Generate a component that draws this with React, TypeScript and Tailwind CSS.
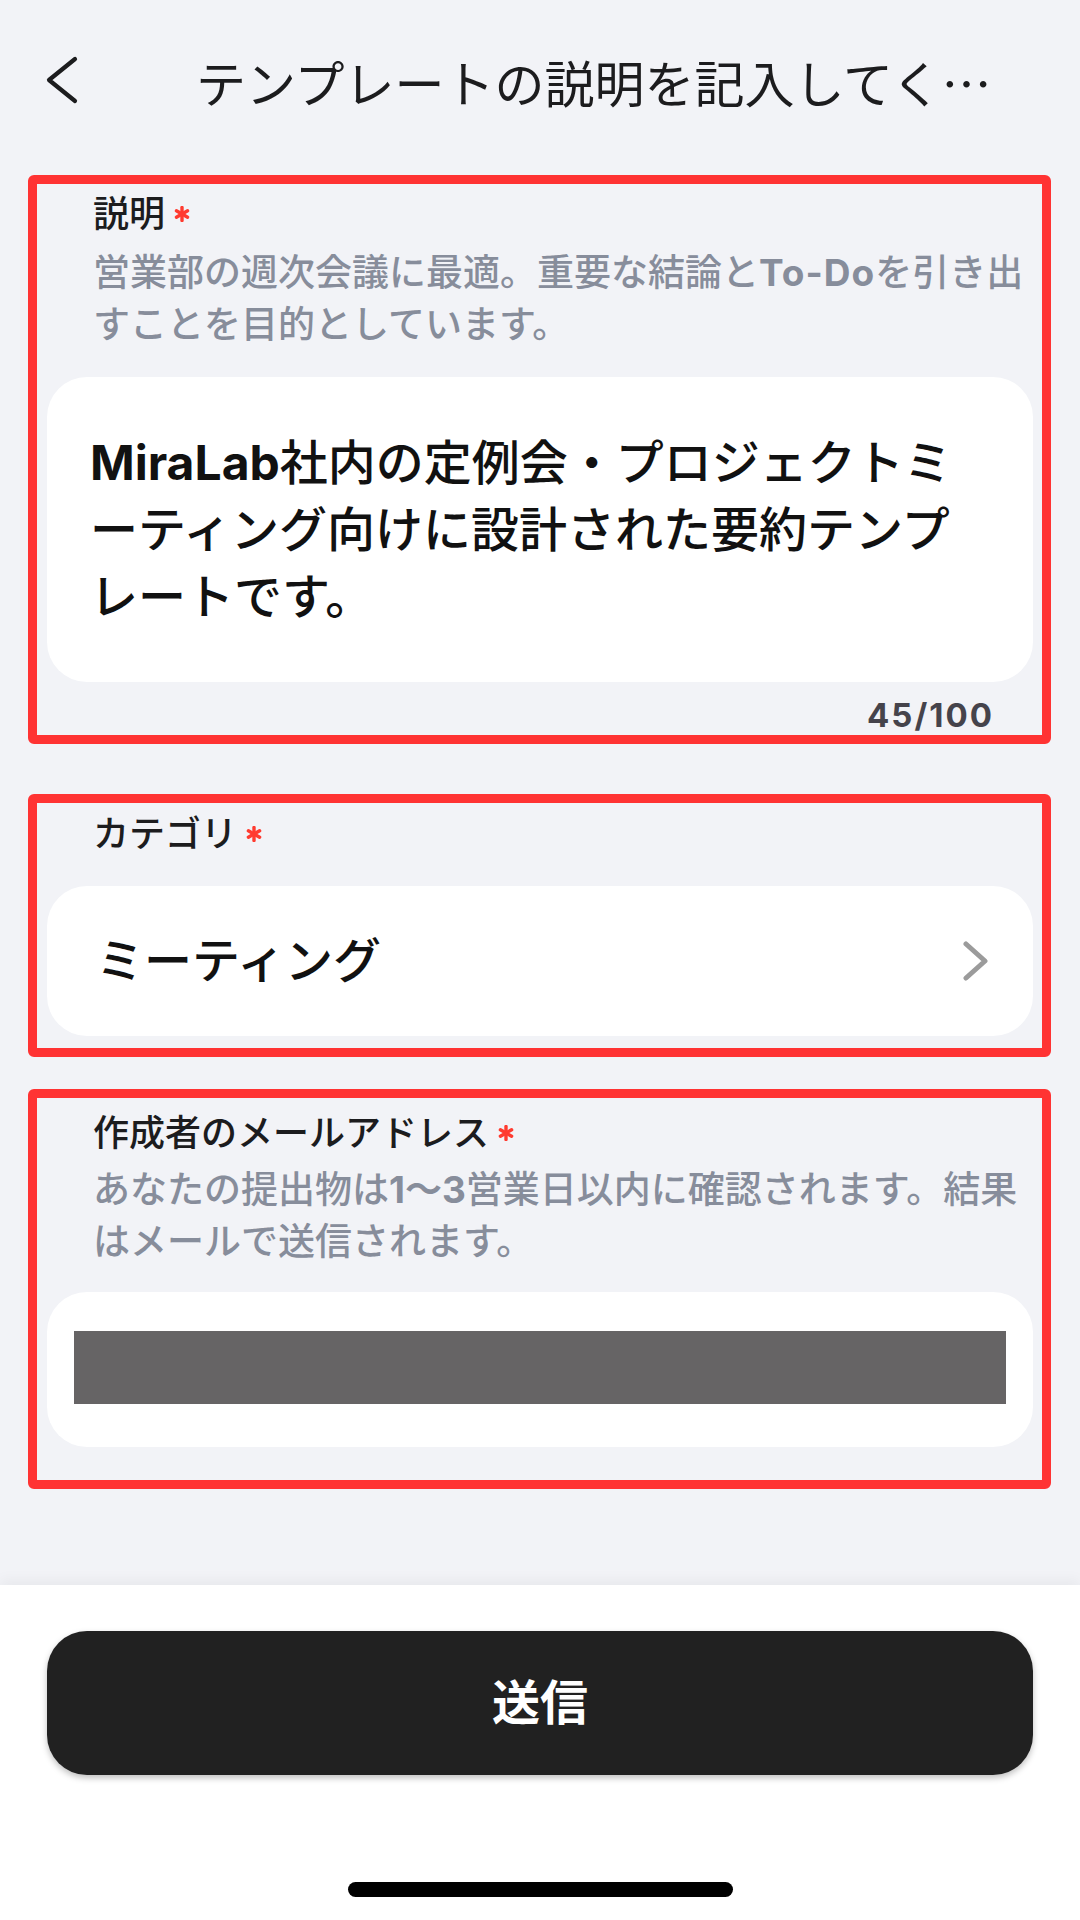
import React from "react";

function Asterisk() {
  return (
    <svg width="16" height="16" viewBox="0 0 16 16" className="ml-[9px] shrink-0">
      <g stroke="#ff3b30" strokeWidth="3.4" strokeLinecap="round">
        <line x1="8" y1="1.5" x2="8" y2="14.5" />
        <line x1="2.4" y1="4.75" x2="13.6" y2="11.25" />
        <line x1="2.4" y1="11.25" x2="13.6" y2="4.75" />
      </g>
    </svg>
  );
}

function Label({ text, pt }: { text: string; pt: string }) {
  return (
    <div className={`flex items-center pl-[46px] ${pt}`}>
      <span className="text-[36px] leading-[48px] font-medium text-[#1c1c1e]">{text}</span>
      <Asterisk />
    </div>
  );
}

export default function App() {
  return (
    <div className="w-[1080px] h-[1920px] flex flex-col bg-[#f2f3f7] font-['Inter','Noto_Sans_CJK_JP',sans-serif] overflow-hidden">
      <div className="h-[1585px] flex flex-col">
        {/* Header */}
        <div className="h-[175px] flex items-start pt-[56px]">
          <svg width="32" height="48" viewBox="0 0 32 48" className="ml-[46px] shrink-0">
            <polyline points="29,3 3,24 29,45" fill="none" stroke="#1c1c1e" strokeWidth="4.2" strokeLinecap="round" strokeLinejoin="round" />
          </svg>
          <div className="ml-[118px] text-[50px] leading-[50px] text-[#1c1c1e] whitespace-nowrap">
            テンプレートの説明を記入してく<span className="font-['Noto_Sans_CJK_JP',sans-serif]">…</span>
          </div>
        </div>

        {/* Section 1 */}
        <div className="ml-[28px] w-[1023px] border-[9px] border-[#ff3333] rounded-[6px] px-[10px] pb-[2px]">
          <Label text="説明" pt="pt-[6px]" />
          <div className="pl-[46px] mt-[9px] text-[37px] leading-[52px] font-medium text-[#878d9b] whitespace-nowrap">
            営業部の週次会議に最適。重要な結論と<span className="font-bold tracking-[1px]">To-Do</span>を引き出
            <br />
            すことを目的としています。
          </div>
          <div className="mt-[26px] w-[986px] bg-white rounded-[40px] px-[43px] py-[52px] text-[48px] leading-[67px] font-medium text-[#111111]">
            <span className="font-bold">MiraLab</span>社内の定例会・プロジェクトミーティング向けに設計された要約テンプレートです。
          </div>
          <div className="mt-[15px] flex justify-end pr-[38px] text-[33px] leading-[36px] font-bold tracking-[2px] text-[#45434b]">
            45/100
          </div>
        </div>

        {/* Section 2 */}
        <div className="mt-[50px] ml-[28px] w-[1023px] border-[9px] border-[#ff3333] rounded-[6px] px-[10px] pb-[12px]">
          <Label text="カテゴリ" pt="pt-[7px]" />
          <div className="mt-[28px] w-[986px] h-[150px] bg-white rounded-[40px] flex items-center justify-between pl-[49px] pr-[44px]">
            <span className="text-[48px] font-medium text-[#111111]">ミーティング</span>
            <svg width="26" height="40" viewBox="0 0 26 40">
              <polyline points="3,3 22,20 3,37" fill="none" stroke="#9b9b9b" strokeWidth="5" strokeLinecap="round" strokeLinejoin="round" />
            </svg>
          </div>
        </div>

        {/* Section 3 */}
        <div className="mt-[32px] ml-[28px] w-[1023px] border-[9px] border-[#ff3333] rounded-[6px] px-[10px] pb-[33px]">
          <Label text="作成者のメールアドレス" pt="pt-[11px]" />
          <div className="pl-[46px] mt-[7px] text-[37px] leading-[52px] font-medium text-[#878d9b] whitespace-nowrap">
            あなたの提出物は<span className="font-bold">1〜3</span>営業日以内に確認されます。結果
            <br />
            はメールで送信されます。
          </div>
          <div className="mt-[24px] w-[986px] h-[155px] bg-white rounded-[40px] pt-[39px] pl-[27px]">
            <div className="w-[932px] h-[73px] bg-[#666465]" />
          </div>
        </div>
      </div>

      {/* Footer */}
      <div className="h-[335px] bg-white relative shadow-[0_-6px_12px_rgba(0,0,0,0.04)] flex flex-col items-center">
        <button className="mt-[46px] w-[986px] h-[144px] rounded-[40px] bg-[#212121] shadow-[0_3px_6px_rgba(0,0,0,0.25)] flex items-center justify-center">
          <span className="text-[48px] font-bold text-white">送信</span>
        </button>
        <div className="mt-[107px] w-[385px] h-[15px] rounded-full bg-black" />
      </div>
    </div>
  );
}
